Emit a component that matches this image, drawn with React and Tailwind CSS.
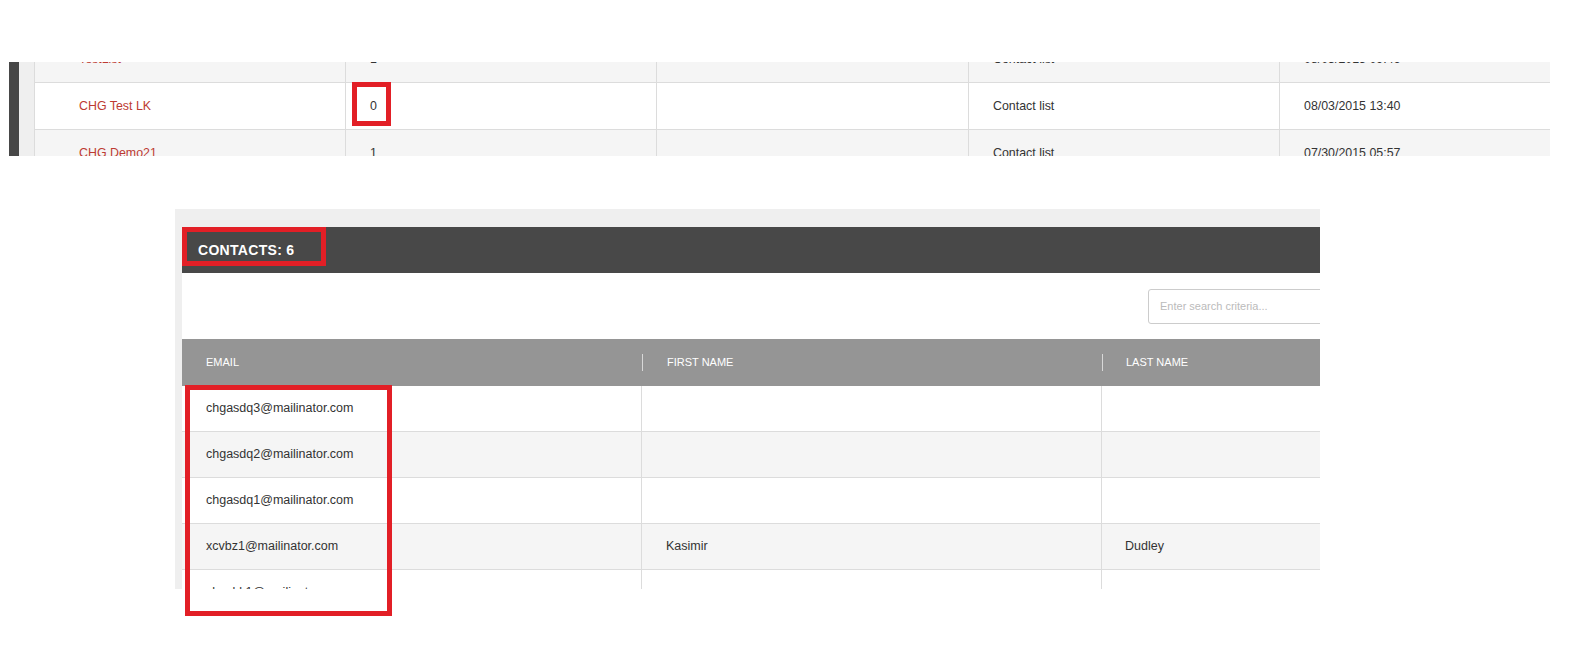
import React from "react";

const font = { fontFamily: '"Liberation Sans", Arial, sans-serif' };

const topRows = [
  { name: "TestList", count: "1", type: "Contact list", date: "08/03/2015 09:46", bg: "bg-[#f5f5f5]" },
  { name: "CHG Test LK", count: "0", type: "Contact list", date: "08/03/2015 13:40", bg: "bg-white", mark: true },
  { name: "CHG Demo21", count: "1", type: "Contact list", date: "07/30/2015 05:57", bg: "bg-[#f5f5f5]" },
];

const contacts = [
  { email: "chgasdq3@mailinator.com", first: "", last: "", bg: "bg-white" },
  { email: "chgasdq2@mailinator.com", first: "", last: "", bg: "bg-[#f5f5f5]" },
  { email: "chgasdq1@mailinator.com", first: "", last: "", bg: "bg-white" },
  { email: "xcvbz1@mailinator.com", first: "Kasimir", last: "Dudley", bg: "bg-[#f5f5f5]" },
  { email: "xhvnbk1@mailinator.com", first: "", last: "", bg: "bg-white" },
];

function TopTable() {
  return (
    <div className="ml-[9px] flex h-[94px] w-[1541px] overflow-hidden">
      <div className="w-[10px] shrink-0 bg-[#474747]" />
      <div className="w-[15px] shrink-0 bg-[#efefef]" />
      <div className="flex-1 overflow-hidden border-l border-[#dcdcdc]">
        <div className="-mt-[26px]">
          {topRows.map((r, i) => (
            <div key={i} className={`flex h-[47px] border-b border-[#dcdcdc] text-[12.4px] text-[#333] ${r.bg}`}>
              <div className="flex w-[311px] shrink-0 items-center border-r border-[#dcdcdc] pl-[44px] text-[#bd3a32]">
                {r.name}
              </div>
              <div className="relative flex w-[311px] shrink-0 items-center border-r border-[#dcdcdc] pl-[24px]">
                {r.count}
                {r.mark && (
                  <div className="absolute left-[6px] -top-[1px] h-[44px] w-[39px] border-[5px] border-[#e21f26]" />
                )}
              </div>
              <div className="w-[312px] shrink-0 border-r border-[#dcdcdc]" />
              <div className="flex w-[311px] shrink-0 items-center border-r border-[#dcdcdc] pl-[24px]">
                {r.type}
              </div>
              <div className="flex flex-1 items-center pl-[24px]">{r.date}</div>
            </div>
          ))}
        </div>
      </div>
    </div>
  );
}

function Contacts() {
  return (
    <div className="relative ml-[175px] mt-[53px] w-[1145px]">
      <div className="h-[380px] overflow-hidden bg-[#efefef] pl-[7px] pt-[18px]">
        <div className="h-full overflow-hidden bg-white">
          <div className="relative flex h-[46px] items-center bg-[#484848] pl-[16px]">
            <span className="text-[14px] font-bold tracking-[0.3px] text-white">CONTACTS: 6</span>
            <div className="absolute left-0 top-0 h-[39px] w-[144px] border-[5px] border-[#e21f26]" />
          </div>
          <div className="flex h-[66px] items-center justify-end">
            <div className="-mr-[8px] flex h-[35px] w-[180px] shrink-0 items-center rounded-[3px] border border-[#cccccc] pl-[11px] text-[11px] text-[#bbbbbb]">
              Enter search criteria...
            </div>
          </div>
          <div className="flex h-[47px] bg-[#959595] text-[11px] uppercase text-white">
            <div className="flex w-[460px] shrink-0 items-center pl-[24px]">Email</div>
            <div className="my-[15px] w-px bg-[#d8d8d8]" />
            <div className="flex w-[459px] shrink-0 items-center pl-[24px]">First Name</div>
            <div className="my-[15px] w-px bg-[#d8d8d8]" />
            <div className="flex flex-1 items-center pl-[23px]">Last Name</div>
          </div>
          {contacts.map((c, i) => (
            <div key={i} className={`flex h-[46px] border-b border-[#dcdcdc] text-[12.5px] text-[#333] ${c.bg}`}>
              <div className="flex w-[460px] shrink-0 items-center border-r border-[#dcdcdc] pl-[24px]">{c.email}</div>
              <div className="flex w-[460px] shrink-0 items-center border-r border-[#dcdcdc] pl-[24px]">{c.first}</div>
              <div className="flex flex-1 items-center pl-[23px]">{c.last}</div>
            </div>
          ))}
        </div>
      </div>
      <div className="absolute left-[10px] top-[176px] h-[231px] w-[207px] border-[5px] border-[#e21f26]" />
    </div>
  );
}

export default function App() {
  return (
    <div className="h-[665px] w-[1584px] overflow-hidden bg-white pt-[62px]" style={font}>
      <TopTable />
      <Contacts />
    </div>
  );
}
